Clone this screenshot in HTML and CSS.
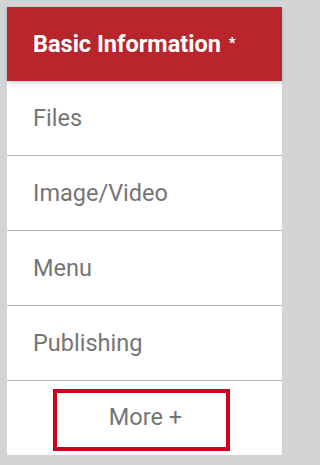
FILE: index.html
```html
<!DOCTYPE html>
<html>
<head>
<meta charset="utf-8">
<link rel="stylesheet" href="styles.css">
</head>
<body>
<nav class="panel">
  <div class="item active">Basic Information <span class="star">*</span></div>
  <div class="item">Files</div>
  <div class="item">Image/Video</div>
  <div class="item">Menu</div>
  <div class="item">Publishing</div>
  <div class="more-row"><button class="more">More +</button></div>
</nav>
</body>
</html>
```
FILE: styles.css
```css
html, body {
  margin: 0;
  padding: 0;
  background: #d3d4d6;
}
body {
  width: 291px;
  box-sizing: border-box;
  padding: 7px 9px 10px 7px;
  font-family: Roboto, "Liberation Sans", sans-serif;
}
.panel {
  width: 275px;
  background: #fff;
  display: flex;
  flex-direction: column;
}
.item {
  box-sizing: border-box;
  padding-left: 26px;
  display: flex;
  align-items: center;
  font-size: 23.5px;
  color: #757575;
  border-bottom: 1px solid #b5b5b5;
  height: 75px;
}
.item.active {
  background: #b8262c;
  color: #fff;
  font-weight: bold;
  border-bottom: none;
  height: 74px;
  box-shadow: 0 2px 4px rgba(0,0,0,0.18);
  position: relative;
  z-index: 1;
}
.star {
  font-size: 15px;
  margin-left: 8px;
  align-self: flex-start;
  margin-top: 27px;
}
.more-row {
  display: flex;
  justify-content: center;
  padding: 8px 0 4px 0;
}
.more {
  width: 177px;
  height: 62px;
  box-sizing: border-box;
  border: 4px solid #d0021b;
  background: #fff;
  font-family: Roboto, "Liberation Sans", sans-serif;
  font-size: 23.5px;
  color: #757575;
  margin-left: -6px;
  padding: 0 0 6px 8px;
}
```
